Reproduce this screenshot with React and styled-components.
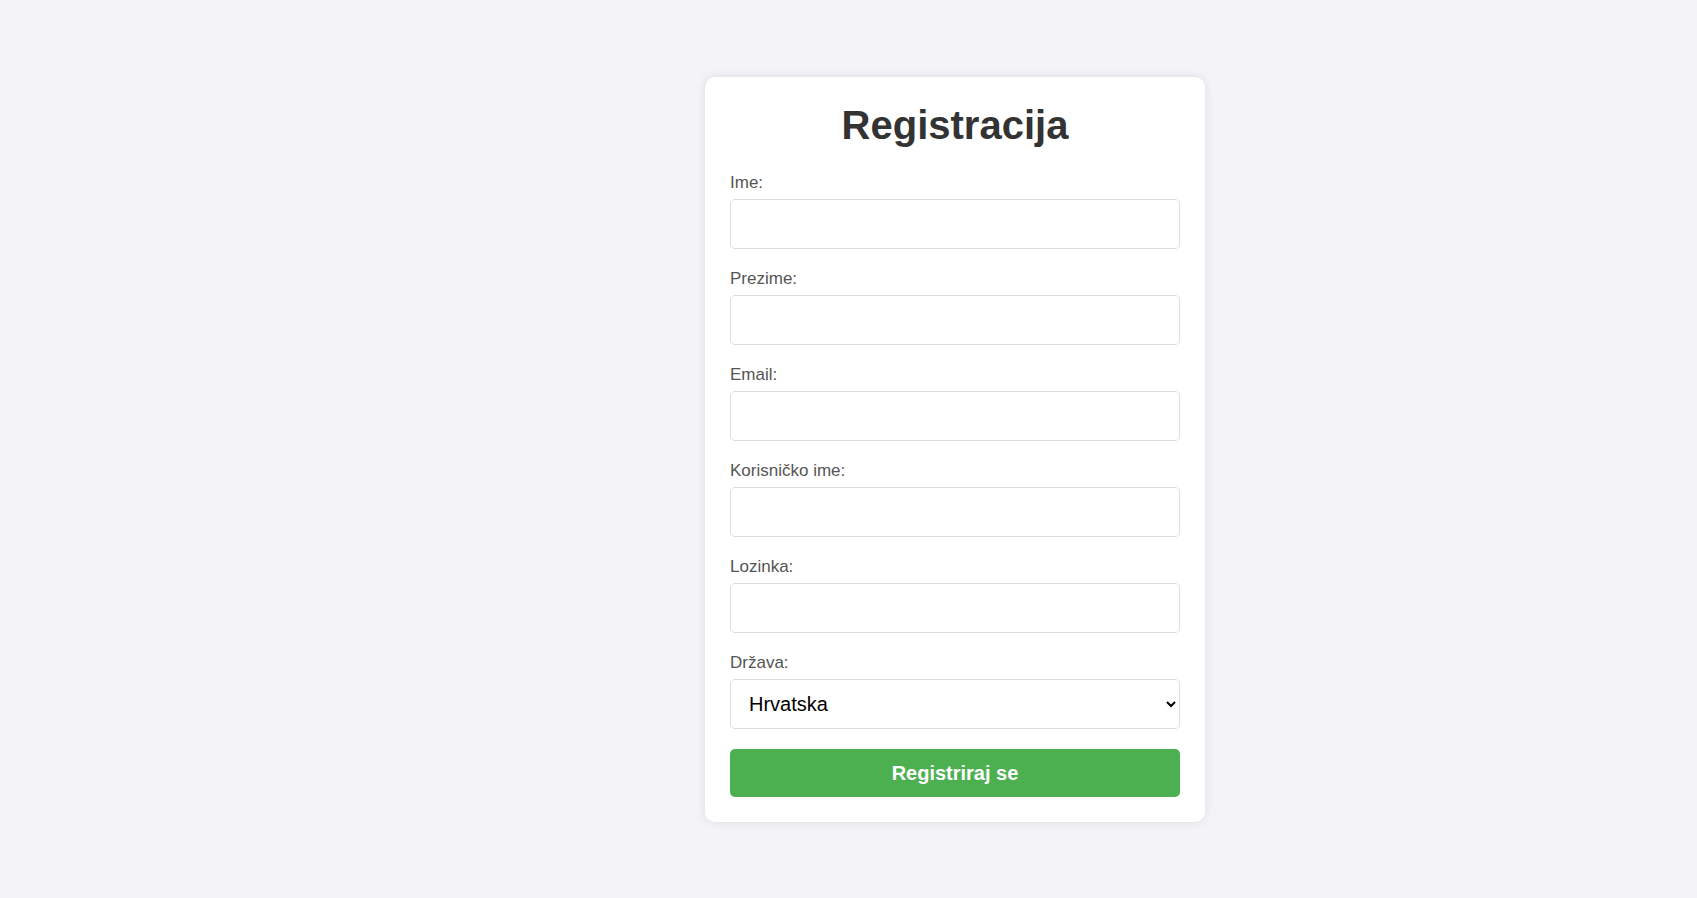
import { useState } from "react";
import styled, { createGlobalStyle } from "styled-components";

const GlobalStyle = createGlobalStyle`
  html, body {
    margin: 0;
    padding: 0;
    background: #f4f4f8;
    font-family: "Liberation Sans", Arial, sans-serif;
  }
`;

const fields = [
  { name: "ime", label: "Ime:", type: "text" },
  { name: "prezime", label: "Prezime:", type: "text" },
  { name: "email", label: "Email:", type: "email" },
  { name: "korisnicko", label: "Korisničko ime:", type: "text" },
  { name: "lozinka", label: "Lozinka:", type: "password" },
];

const App = () => {
  const [state, setState] = useState({
    ime: "",
    prezime: "",
    email: "",
    korisnicko: "",
    lozinka: "",
    drzava: "Hrvatska",
  });

  const handleChange = (e) => {
    setState({ ...state, [e.target.name]: e.target.value });
  };

  return (
    <Page>
      <GlobalStyle />
      <Card onSubmit={(e) => e.preventDefault()}>
        <Title>Registracija</Title>
        {fields.map((f) => (
          <Group key={f.name}>
            <Label htmlFor={f.name}>{f.label}</Label>
            <Input
              id={f.name}
              name={f.name}
              type={f.type}
              value={state[f.name]}
              onChange={handleChange}
            />
          </Group>
        ))}
        <Group>
          <Label htmlFor="drzava">Država:</Label>
          <Select
            id="drzava"
            name="drzava"
            value={state.drzava}
            onChange={handleChange}
          >
            <option>Hrvatska</option>
            <option>Slovenija</option>
            <option>Srbija</option>
            <option>Bosna i Hercegovina</option>
          </Select>
        </Group>
        <SubmitButton type="submit">Registriraj se</SubmitButton>
      </Card>
    </Page>
  );
};

export default App;

const Page = styled.div`
  display: flex;
  justify-content: center;
  padding: 77px 0 76px 213px;
`;

const Card = styled.form`
  width: 450px;
  padding: 25px;
  background: #fff;
  border-radius: 10px;
  box-shadow: 0 0 10px rgba(0, 0, 0, 0.1);
`;

const Title = styled.h1`
  margin: 0 0 23px;
  text-align: center;
  font-size: 40px;
  line-height: 46px;
  font-weight: bold;
  color: #333;
`;

const Group = styled.div`
  margin-bottom: 18px;
  &:last-of-type {
    margin-bottom: 20px;
  }
`;

const Label = styled.label`
  display: block;
  margin-bottom: 5px;
  font-size: 17px;
  line-height: 23px;
  color: #555;
`;

const Input = styled.input`
  display: block;
  box-sizing: border-box;
  width: 100%;
  height: 50px;
  padding: 0 15px;
  border: 1px solid #ddd;
  border-radius: 5px;
  font-family: inherit;
  font-size: 20px;
  background: #fff;
  outline: none;
`;

const Select = styled.select`
  display: block;
  box-sizing: border-box;
  width: 100%;
  height: 50px;
  padding: 0 22px 0 14px;
  border: 1px solid #ddd;
  border-radius: 5px;
  font-family: inherit;
  font-size: 20px;
  color: #000;
  background: #fff;
  outline: none;
`;

const SubmitButton = styled.button`
  display: block;
  width: 100%;
  height: 48px;
  border: none;
  border-radius: 5px;
  background: #4caf50;
  color: #fff;
  font-family: inherit;
  font-size: 20px;
  font-weight: bold;
  cursor: pointer;
`;
